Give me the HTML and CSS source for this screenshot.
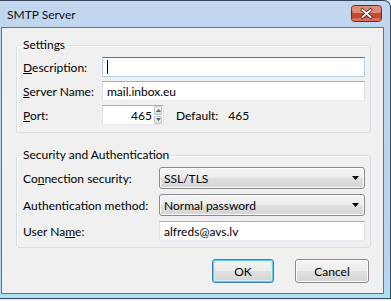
FILE: index.html
```html
<!DOCTYPE html>
<html lang="en">
<head>
    <meta charset="UTF-8">
    <title>SMTP Server</title>
    <link rel="stylesheet" href="styles.css">
</head>
<body>
    <div class="window">
        <div class="titlebar">
            <span class="title">SMTP Server</span>
            <svg class="close-btn" width="31" height="17" viewBox="0 0 31 17">
                <rect x="0.5" y="0.5" width="30" height="16" rx="3" fill="#c7482f" stroke="#6b2a22"/>
                <rect x="1" y="1" width="29" height="7" rx="2" fill="#f4c2b6" fill-opacity="0.55"/>
                <rect x="1" y="13" width="29" height="3" rx="2" fill="#f0a58c" fill-opacity="0.45"/>
                <path d="M11.5 5 L19.5 12 M19.5 5 L11.5 12" stroke="#5b2a24" stroke-width="3.4" stroke-linecap="square"/>
                <path d="M11.5 5 L19.5 12 M19.5 5 L11.5 12" stroke="#fff" stroke-width="1.8" stroke-linecap="square"/>
            </svg>
        </div>
        <div class="client">
            <fieldset class="group">
                <legend>Settings</legend>
                <div class="form-grid settings-grid">
                    <label><u>D</u>escription:</label>
                    <div class="textbox focused"><span class="caret"></span></div>

                    <label><u>S</u>erver Name:</label>
                    <div class="textbox">mail.inbox.eu</div>

                    <label><u>P</u>ort:</label>
                    <div class="port-row">
                        <div class="textbox port-box">
                            <span class="port-value">465</span>
                            <div class="spin-buttons">
                                <span class="spin-btn">
                                    <svg width="5" height="3" viewBox="0 0 5 3"><path d="M0 3 L2.5 0 L5 3 Z" fill="#56606c"/></svg>
                                </span>
                                <span class="spin-btn">
                                    <svg width="5" height="3" viewBox="0 0 5 3"><path d="M0 0 L2.5 3 L5 0 Z" fill="#56606c"/></svg>
                                </span>
                            </div>
                        </div>
                        <span class="default-label">Default:</span>
                        <span class="default-value">465</span>
                    </div>
                </div>
            </fieldset>

            <fieldset class="group security">
                <legend>Security and Authentication</legend>
                <div class="form-grid security-grid">
                    <label>Co<u>n</u>nection security:</label>
                    <div class="combo">
                        <span>SSL/TLS</span>
                        <svg width="7" height="4" viewBox="0 0 7 4"><path d="M0 0 L7 0 L3.5 4 Z" fill="#000"/></svg>
                    </div>

                    <label>Authent<u>i</u>cation method:</label>
                    <div class="combo">
                        <span>Normal password</span>
                        <svg width="7" height="4" viewBox="0 0 7 4"><path d="M0 0 L7 0 L3.5 4 Z" fill="#000"/></svg>
                    </div>

                    <label>User Na<u>m</u>e:</label>
                    <div class="textbox">alfreds@avs.lv</div>
                </div>
            </fieldset>

            <div class="button-row">
                <div class="btn btn-default">OK</div>
                <div class="btn">Cancel</div>
            </div>
        </div>
    </div>
</body>
</html>
```

FILE: styles.css
```css
* {
    box-sizing: border-box;
}
body {
    margin: 0;
    background: #eef0f2;
    font-family: Lato, "Segoe UI", sans-serif;
    font-size: 12px;
    font-weight: 400;
    color: #000;
}

.window {
    width: 391px;
    height: 299px;
    display: flex;
    flex-direction: column;
    padding: 0 6px 4px 1px;
    border: 1px solid #34475b;
    border-left: none;
    border-top-right-radius: 7px;
    background: linear-gradient(#c2d7ee, #bad3ed 85%, #aee0f5);
}

.titlebar {
    height: 26px;
    display: flex;
    align-items: flex-start;
    justify-content: space-between;
    padding-left: 6px;
}

.title {
    margin-top: 7px;
    line-height: 14px;
    color: #111;
}

.close-btn {
    display: block;
    flex-shrink: 0;
    margin-top: 4px;
    margin-right: 2px;
}

.client {
    flex: 1;
    display: flex;
    flex-direction: column;
    background: #f0f0f0;
    border: 1px solid #5d7490;
}

.group {
    margin: 9px 12px 0 14px;
    padding: 4px 5px 7px 6px;
    border: 1px solid #d5dfe5;
    border-radius: 3px;
    box-shadow: inset 1px 1px 0 #fff;
}

.group legend {
    margin-left: -2px;
    padding: 0 2px;
    line-height: 16px;
}

.group.security {
    margin-top: 14px;
    padding-bottom: 6px;
}

.form-grid {
    display: grid;
    align-items: center;
}

.settings-grid {
    grid-template-columns: 79px 263px;
    row-gap: 4px;
}

.security-grid {
    grid-template-columns: 136px 206px;
    row-gap: 5px;
}

.form-grid u {
    text-underline-offset: 1px;
}

.textbox {
    height: 20px;
    display: flex;
    align-items: center;
    padding-left: 4px;
    background: #fff;
    border: 1px solid #e2e3ea;
    border-top-color: #abadb3;
    border-bottom-color: #e3e9ef;
}

.textbox.focused {
    border-color: #b5cfe7;
    border-top-color: #3d7bad;
}

.caret {
    width: 1px;
    height: 14px;
    background: #000;
}

.port-row {
    display: flex;
    align-items: center;
}

.port-box {
    width: 62px;
    padding: 0 1px 0 0;
    justify-content: flex-end;
}

.port-value {
    margin-right: 2px;
}

.spin-buttons {
    width: 8px;
    height: 18px;
    display: flex;
    flex-direction: column;
    gap: 1px;
}

.spin-btn {
    flex: 1;
    display: flex;
    align-items: center;
    justify-content: center;
    border: 1px solid #c4c8ce;
    border-radius: 1px;
    background: linear-gradient(#f6f6f6, #dcdcdc);
}

.default-label {
    margin-left: 12px;
}

.default-value {
    margin-left: 10px;
}

.combo {
    height: 22px;
    display: flex;
    align-items: center;
    justify-content: space-between;
    padding: 0 5px 0 4px;
    border: 1px solid #8a8a8a;
    border-radius: 3px;
    background: linear-gradient(#f4f4f4 0%, #ececec 50%, #e0e0e0 50%, #d4d4d4 100%);
    box-shadow: inset 0 0 0 1px #fcfcfc;
}

.button-row {
    display: flex;
    justify-content: flex-end;
    gap: 21px;
    margin: 11px 14px 0 0;
}

.btn {
    height: 24px;
    width: 74px;
    display: flex;
    align-items: center;
    justify-content: center;
    border: 1px solid #8a8a8a;
    border-radius: 3px;
    background: linear-gradient(#f4f4f4 0%, #ececec 50%, #e0e0e0 50%, #d4d4d4 100%);
    box-shadow: inset 0 0 0 1px #fcfcfc;
}

.btn-default {
    width: 62px;
    border-color: #3c7fb1;
    box-shadow: inset 0 0 0 1px #5fcdf2, inset 0 0 0 2px #d3eefa;
}
```
